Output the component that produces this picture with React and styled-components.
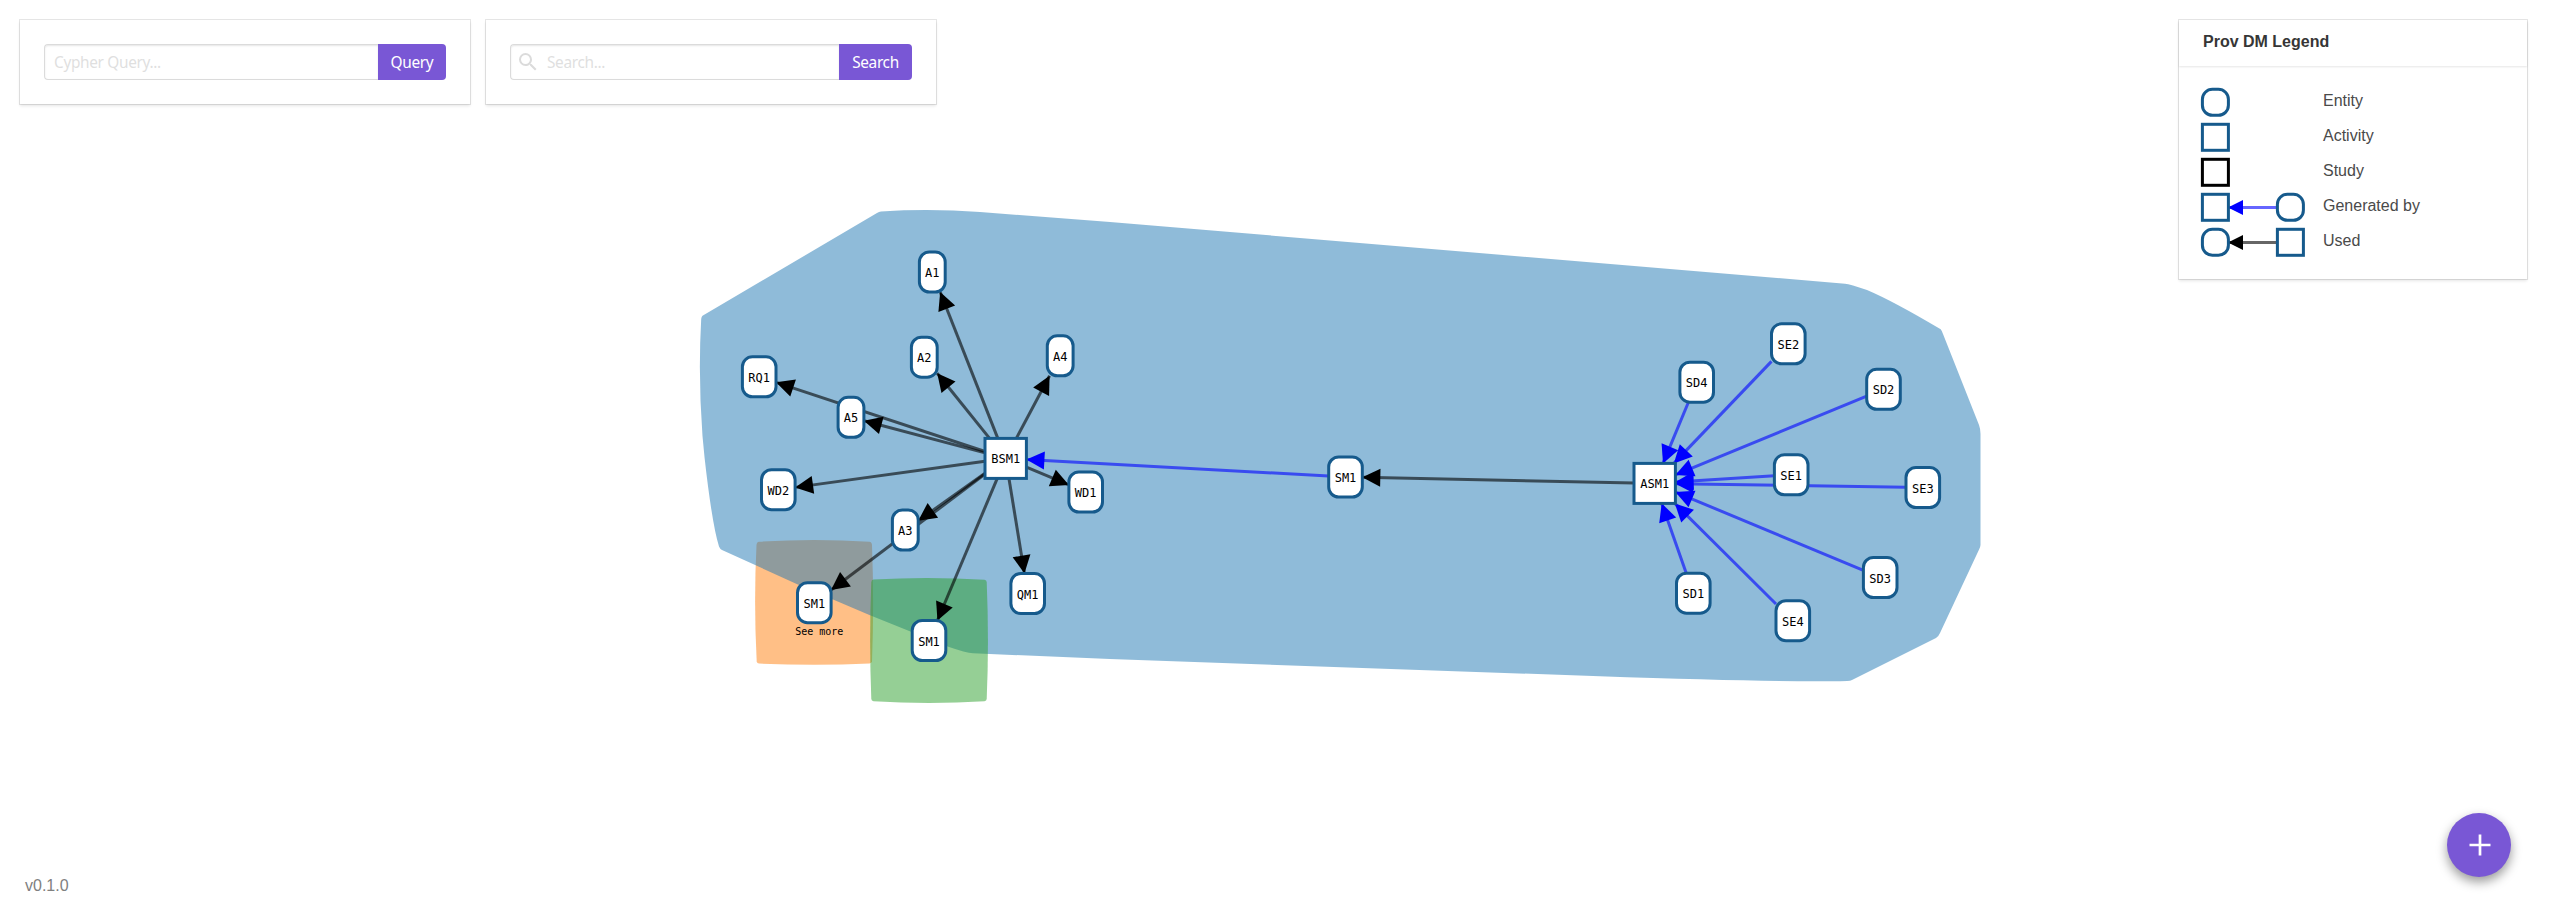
import React from "react";
import styled, { createGlobalStyle } from "styled-components";

const GlobalStyle = createGlobalStyle`
  * { box-sizing: border-box; }
  html, body { margin: 0; padding: 0; background: #fff; overflow: hidden; }
  body {
    font-family: "Liberation Sans", Arial, sans-serif;
    font-size: 16px;
    line-height: 24px;
    color: #4a4a4a;
  }
`;

const Page = styled.main`
  position: relative;
  display: flex;
  flex-direction: column;
  justify-content: space-between;
  width: 2560px;
  height: 916px;
  overflow: hidden;
`;

const Canvas = styled.svg`
  position: absolute;
  inset: 0;
  width: 100%;
  height: 100%;
`;

const TopBar = styled.header`
  position: relative;
  display: flex;
  align-items: flex-start;
  gap: 16px;
  padding: 20px 33px 0 20px;
`;

const Card = styled.section`
  background: #fff;
  box-shadow: 0 2px 3px rgba(10, 10, 10, 0.1), 0 0 0 1px rgba(10, 10, 10, 0.1);
`;

const QueryCard = styled(Card)`
  width: 450px;
  padding: 24px;
`;

const Field = styled.form`
  display: flex;
  height: 36px;
`;

const InputBox = styled.label`
  flex: 1;
  display: flex;
  align-items: center;
  min-width: 0;
  padding-left: ${(p) => (p.$icon ? 5 : 9)}px;
  border: 1px solid #dbdbdb;
  border-right: 0;
  border-radius: 4px 0 0 4px;
  box-shadow: inset 0 1px 2px rgba(10, 10, 10, 0.1);
`;

const SearchIcon = styled.svg`
  flex: none;
  width: 24px;
  height: 24px;
  margin-right: 7px;
  fill: #dbdbdb;
`;

const Input = styled.input`
  flex: 1;
  min-width: 0;
  height: 34px;
  padding: 0;
  border: 0;
  outline: 0;
  background: transparent;
  font-family: "Noto Sans", sans-serif;
  font-size: 15.4px;
  letter-spacing: -0.33px;
  color: #363636;
  &::placeholder { color: #dfdfdf; opacity: 1; }
`;

const Button = styled.button`
  flex: none;
  width: ${(p) => p.$width}px;
  padding: 0;
  border: 0;
  border-radius: 0 4px 4px 0;
  background: #7957d5;
  color: #fff;
  font-family: "Noto Sans", sans-serif;
  font-size: 15.4px;
  letter-spacing: -0.33px;
`;

const LegendCard = styled(Card)`
  width: 348px;
  height: 259px;
  margin-left: auto;
`;

const LegendTitle = styled.h2`
  height: 46px;
  margin: 0;
  padding: 10px 24px;
  font-size: 16px;
  font-weight: 700;
  color: #363636;
  box-shadow: 0 1px 2px rgba(10, 10, 10, 0.1);
`;

const LegendList = styled.ul`
  margin: 0;
  padding: 19px 21px;
  list-style: none;
`;

const LegendRow = styled.li`
  display: flex;
  height: 35px;
`;

const LegendDrawing = styled.svg`
  flex: none;
  width: 123px;
  height: 35px;
`;

const LegendLabel = styled.span`
  padding-top: 4px;
`;

const BottomBar = styled.footer`
  position: relative;
  display: flex;
  align-items: flex-end;
  justify-content: space-between;
  padding: 0 49px 18px 25px;
`;

const Version = styled.span`
  color: #808080;
`;

const AddButton = styled.button`
  display: flex;
  align-items: center;
  justify-content: center;
  width: 64px;
  height: 64px;
  margin-bottom: 21px;
  padding: 0 0 0 1px;
  border: 0;
  border-radius: 50%;
  background: #7957d5;
  box-shadow: 0 5px 11px rgba(0, 0, 0, 0.4);
`;

const NodeShape = styled.rect`
  fill: #fff;
  stroke: ${(p) => p.$stroke || "#165a8c"};
  stroke-width: 3px;
`;

const NodeText = styled.text`
  font-family: "DejaVu Sans Mono", monospace;
  font-size: ${(p) => p.$size || 12}px;
  text-anchor: middle;
  fill: #000;
`;

const EdgeLine = styled.line`
  stroke: ${(p) => p.$color};
  stroke-opacity: 0.6;
  stroke-width: 3px;
`;

const Hull = styled.path`
  fill: ${(p) => p.$color};
  fill-opacity: 0.5;
`;

const nodes = {
  A1: { x: 932.3, y: 272 },
  A2: { x: 924.3, y: 357.2 },
  A4: { x: 1060.2, y: 355.8 },
  A5: { x: 851, y: 417.3 },
  RQ1: { x: 759.2, y: 376.8 },
  WD2: { x: 778.3, y: 489.7 },
  A3: { x: 905.3, y: 530 },
  WD1: { x: 1085.7, y: 492 },
  orangeSM1: { label: "SM1", x: 814.3, y: 602.7 },
  greenSM1: { label: "SM1", x: 929, y: 640.5 },
  QM1: { x: 1027.7, y: 593.5 },
  BSM1: { x: 1005.7, y: 458.4, square: true },
  middleSM1: { label: "SM1", x: 1345.5, y: 477 },
  ASM1: { x: 1654.7, y: 483.4, square: true },
  SE2: { x: 1788.3, y: 343.8 },
  SD4: { x: 1696.7, y: 382.2 },
  SD2: { x: 1883.5, y: 389.3 },
  SE1: { x: 1791.2, y: 474.8 },
  SE3: { x: 1922.8, y: 487.5 },
  SD1: { x: 1693.3, y: 593.2 },
  SE4: { x: 1792.8, y: 620.7 },
  SD3: { x: 1880.2, y: 577.5 },
};

const used = [
  ["BSM1", "A1"], ["BSM1", "A2"], ["BSM1", "A4"], ["BSM1", "A5"], ["BSM1", "RQ1"],
  ["BSM1", "WD2"], ["BSM1", "A3"], ["BSM1", "WD1"], ["BSM1", "orangeSM1"],
  ["BSM1", "greenSM1"], ["BSM1", "QM1"], ["ASM1", "middleSM1"],
];

const generated = [
  ["middleSM1", "BSM1"], ["SE2", "ASM1"], ["SD4", "ASM1"], ["SD2", "ASM1"], ["SE1", "ASM1"],
  ["SE3", "ASM1"], ["SD1", "ASM1"], ["SE4", "ASM1"], ["SD3", "ASM1"],
];

const NODE_HEIGHT = 40;
const nodeWidth = (label) => ({ 2: 25.8, 3: 33.6, 4: 41.4 })[label.length];

// Point where the ray from the node's centre towards another point leaves its box.
function borderPoint(id, towards) {
  const n = nodes[id];
  const dx = towards.x - n.x;
  const dy = towards.y - n.y;
  const w = nodeWidth(n.label || id) / 2;
  const t = Math.min(w / Math.abs(dx || 1e-6), NODE_HEIGHT / 2 / Math.abs(dy || 1e-6));
  return { x: n.x + dx * t, y: n.y + dy * t };
}

function ArrowHead({ tip, from, color, size = 18 }) {
  const angle = (Math.atan2(tip.y - from.y, tip.x - from.x) * 180) / Math.PI;
  return (
    <path
      d={`M0 0L${-size} ${-size / 2}V${size / 2}Z`}
      fill={color}
      transform={`translate(${tip.x} ${tip.y}) rotate(${angle})`}
    />
  );
}

function Edge({ source, target, color }) {
  const start = borderPoint(source, nodes[target]);
  const end = borderPoint(target, nodes[source]);
  return (
    <g>
      <EdgeLine $color={color} x1={start.x} y1={start.y} x2={end.x} y2={end.y} />
      <ArrowHead tip={end} from={start} color={color} />
    </g>
  );
}

function Node({ id }) {
  const { x, y, square, label = id } = nodes[id];
  const w = nodeWidth(label);
  return (
    <g>
      <NodeShape x={x - w / 2} y={y - NODE_HEIGHT / 2} width={w} height={NODE_HEIGHT} rx={square ? 0 : 10} />
      <NodeText x={x} y={y + 5}>{label}</NodeText>
    </g>
  );
}

function Graph() {
  return (
    <Canvas viewBox="0 0 2560 916">
      <Hull $color="#ff7f0e" d="M759 541.8Q814 538.2 869.5 541.8Q871.8 542 872 545Q874.2 603 872 661.5Q871.8 663.2 869.5 663.5Q814 666 759 663.5Q757 663.3 756.7 661.5Q753.6 603 756.5 545Q756.7 542 759 541.8Z" />
      <Hull
        $color="#1f77b4"
        d="M702.5 315.8L877 213Q879 211.8 881 211.5Q930 208.5 980 212L1110 222L1845 283.7Q1850 284 1867 290Q1893 301 1940.7 329.3Q1942 331 1943 334L1979 425Q1980.5 429 1980.5 434V545Q1980.3 547 1979.3 549L1940 633Q1938.5 636.5 1936 638L1852 680Q1850.5 681 1847 681Q1780 682.5 1600 676.3L1110 659L973 653.3Q966 652.8 948.3 646.7L870 615.3L796.7 584L722 550Q720 549 719 546.5Q712 524 704.5 457L702.5 436Q698 376 701.2 319Q701.5 316.5 702.5 315.8Z"
      />
      <Hull $color="#2ca02c" d="M873.5 579.5Q929 576.3 984.5 579.8Q986.5 580 986.7 582Q989.2 641 986.7 699Q986.5 700.8 984.5 701.2Q929 704.6 873.5 701.2Q871.5 701 871.3 699Q869 641 871.3 582Q871.5 579.7 873.5 579.5Z" />
      {used.map(([s, t]) => <Edge key={s + t} source={s} target={t} color="#000" />)}
      {generated.map(([s, t]) => <Edge key={s + t} source={s} target={t} color="#00f" />)}
      {Object.keys(nodes).map((id) => <Node key={id} id={id} />)}
      <NodeText x="819.3" y="635" $size={10}>See more</NodeText>
    </Canvas>
  );
}

const BLUE = "#165a8c";

function LegendMark({ cx, round, color = BLUE }) {
  return <NodeShape x={cx - 13} y={4.3} width="26" height="26" rx={round ? 10 : 0} $stroke={color} />;
}

function LegendLink({ color }) {
  return (
    <g>
      <EdgeLine $color={color} x1="77" y1="17.5" x2="29" y2="17.5" />
      <ArrowHead tip={{ x: 28, y: 17.5 }} from={{ x: 77, y: 17.5 }} color={color} size={15} />
    </g>
  );
}

const legend = [
  { label: "Entity", marks: [{ round: true }] },
  { label: "Activity", marks: [{}] },
  { label: "Study", marks: [{ color: "#000" }] },
  { label: "Generated by", marks: [{}, { round: true }], link: "#00f" },
  { label: "Used", marks: [{ round: true }, {}], link: "#000" },
];

function Legend() {
  return (
    <LegendCard>
      <LegendTitle>Prov DM Legend</LegendTitle>
      <LegendList>
        {legend.map(({ label, marks, link }) => (
          <LegendRow key={label}>
            <LegendDrawing viewBox="0 0 123 35">
              {link && <LegendLink color={link} />}
              {marks.map((m, i) => <LegendMark key={i} cx={15.4 + i * 75} {...m} />)}
            </LegendDrawing>
            <LegendLabel>{label}</LegendLabel>
          </LegendRow>
        ))}
      </LegendList>
    </LegendCard>
  );
}

export default function App() {
  return (
    <Page>
      <GlobalStyle />
      <Graph />
      <TopBar>
        <QueryCard>
          <Field>
            <InputBox><Input placeholder="Cypher Query..." /></InputBox>
            <Button type="button" $width={68}>Query</Button>
          </Field>
        </QueryCard>
        <QueryCard>
          <Field>
            <InputBox $icon>
              <SearchIcon viewBox="0 0 24 24">
                <path d="M9.5,3A6.5,6.5 0 0,1 16,9.5C16,11.11 15.41,12.59 14.44,13.73L14.71,14H15.5L20.5,19L19,20.5L14,15.5V14.71L13.73,14.44C12.59,15.41 11.11,16 9.5,16A6.5,6.5 0 0,1 3,9.5A6.5,6.5 0 0,1 9.5,3M9.5,5C7,5 5,7 5,9.5C5,12 7,14 9.5,14C12,14 14,12 14,9.5C14,7 12,5 9.5,5Z" />
              </SearchIcon>
              <Input placeholder="Search..." />
            </InputBox>
            <Button type="button" $width={73}>Search</Button>
          </Field>
        </QueryCard>
        <Legend />
      </TopBar>
      <BottomBar>
        <Version>v0.1.0</Version>
        <AddButton type="button" aria-label="Add">
          <svg width="22" height="22" viewBox="0 0 22 22">
            <path d="M11 .5V21.5M.5 11H21.5" stroke="#fff" strokeWidth="2.7" />
          </svg>
        </AddButton>
      </BottomBar>
    </Page>
  );
}
